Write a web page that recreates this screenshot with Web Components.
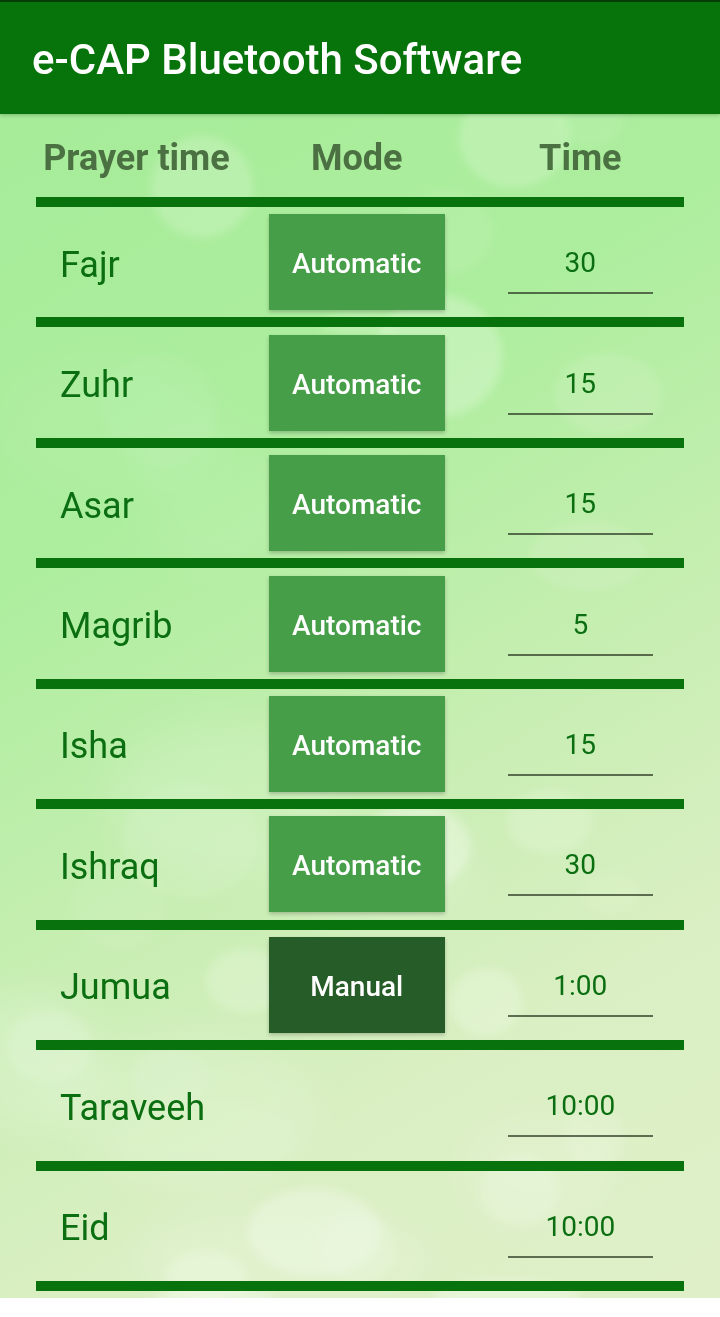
<!DOCTYPE html>
<html lang="en">
<head>
<meta charset="UTF-8">
<meta name="viewport" content="width=device-width, initial-scale=1">
<title>e-CAP Bluetooth Software</title>
<style>
  body {
    margin: 0;
    background: #fff;
    font-family: Roboto, "Liberation Sans", sans-serif;
  }
</style>
</head>
<body>

<ecap-app>
  <app-bar slot="bar">e-CAP Bluetooth Software</app-bar>
  <prayer-table></prayer-table>
</ecap-app>

<script>
class AppBar extends HTMLElement {
  constructor() {
    super();
    this.attachShadow({ mode: "open" });

    this.shadowRoot.innerHTML = `
      <style>
        :host {
          display: block;
          position: relative;
          border-top: 2px solid #043c08;
          background: #07730b;
          box-shadow: 0 1px 4px rgba(0, 60, 0, 0.3);
          color: #fff;
        }

        h1 {
          margin: 0;
          padding: 34px 32px 30px;
          font-size: 42px;
          line-height: 48px;
          font-weight: 500;
        }
      </style>

      <header><h1><slot></slot></h1></header>
    `;
  }
}

/* Soft light spots over the green gradient */
class BokehBackdrop extends HTMLElement {
  constructor() {
    super();
    this.attachShadow({ mode: "open" });

    this.shadowRoot.innerHTML = `
      <style>
        :host {
          display: block;
          background: linear-gradient(150deg, #a6ec99 0%, #adee9e 30%, #c7eeb2 55%, #daefc3 76%, #dff0c8 100%);
        }

        svg {
          display: block;
          width: 100%;
          height: 100%;
        }
      </style>

      <svg viewBox="0 114 720 1184" preserveAspectRatio="none" aria-hidden="true">
        <defs>
          <filter id="soft" x="-20%" y="-20%" width="140%" height="140%"><feGaussianBlur stdDeviation="4"/></filter>
          <filter id="wide" x="-30%" y="-30%" width="160%" height="160%"><feGaussianBlur stdDeviation="18"/></filter>
        </defs>
        <g fill="#fff" filter="url(#wide)">
          <ellipse cx="110" cy="425" rx="110" ry="70" opacity=".06"/>
          <ellipse cx="220" cy="500" rx="80" ry="75" opacity=".06"/>
          <ellipse cx="225" cy="800" rx="120" ry="80" opacity=".12"/>
          <ellipse cx="30" cy="1060" rx="70" ry="70" opacity=".18"/>
          <ellipse cx="380" cy="870" rx="100" ry="60" opacity=".1"/>
          <ellipse cx="190" cy="1110" rx="130" ry="80" opacity=".12"/>
          <ellipse cx="540" cy="1170" rx="80" ry="60" opacity=".12"/>
          <ellipse cx="280" cy="1260" rx="150" ry="50" opacity=".14"/>
        </g>
        <g fill="#f1fbe9" filter="url(#soft)">
          <ellipse cx="202" cy="187" rx="51" ry="51" opacity=".24"/>
          <ellipse cx="514" cy="138" rx="55" ry="50" opacity=".26"/>
          <ellipse cx="592" cy="118" rx="32" ry="30" opacity=".1"/>
          <ellipse cx="446" cy="232" rx="48" ry="42" opacity=".1"/>
          <ellipse cx="438" cy="356" rx="64" ry="61" opacity=".32"/>
          <ellipse cx="360" cy="324" rx="40" ry="11" opacity=".25"/>
          <ellipse cx="608" cy="394" rx="53" ry="40" opacity=".16"/>
          <ellipse cx="588" cy="556" rx="58" ry="34" opacity=".14"/>
          <ellipse cx="160" cy="410" rx="58" ry="56" opacity=".06"/>
          <ellipse cx="190" cy="840" rx="68" ry="58" opacity=".1"/>
          <ellipse cx="118" cy="905" rx="46" ry="44" opacity=".08"/>
          <ellipse cx="416" cy="847" rx="55" ry="44" opacity=".42"/>
          <ellipse cx="550" cy="822" rx="43" ry="32" opacity=".24"/>
          <ellipse cx="610" cy="893" rx="30" ry="20" opacity=".12"/>
          <ellipse cx="246" cy="981" rx="40" ry="32" opacity=".28"/>
          <ellipse cx="486" cy="1002" rx="36" ry="34" opacity=".34"/>
          <ellipse cx="50" cy="1046" rx="42" ry="36" opacity=".2"/>
          <ellipse cx="170" cy="1078" rx="38" ry="32" opacity=".14"/>
          <ellipse cx="206" cy="1138" rx="92" ry="40" opacity=".08"/>
          <ellipse cx="594" cy="1138" rx="30" ry="32" opacity=".22"/>
          <ellipse cx="520" cy="1190" rx="40" ry="36" opacity=".28"/>
          <ellipse cx="314" cy="1232" rx="67" ry="44" opacity=".42"/>
          <ellipse cx="358" cy="1248" rx="38" ry="36" opacity=".25"/>
          <ellipse cx="206" cy="1278" rx="42" ry="28" opacity=".34"/>
          <ellipse cx="215" cy="1302" rx="62" ry="14" opacity=".55"/>
          <ellipse cx="506" cy="1298" rx="74" ry="18" opacity=".5"/>
        </g>
      </svg>
    `;
  }
}

class ModeButton extends HTMLElement {
  constructor() {
    super();
    this.attachShadow({ mode: "open" });

    this.shadowRoot.innerHTML = `
      <style>
        :host {
          display: block;
        }

        button {
          display: block;
          box-sizing: border-box;
          width: 176px;
          height: 96px;
          margin: 0 auto;
          padding: 4px 0 0;
          border: none;
          background: #469e48;
          box-shadow: 0 2px 4px rgba(0, 0, 0, 0.22);
          color: #fff;
          font: 500 28px/32px Roboto, "Liberation Sans", sans-serif;
          cursor: pointer;
        }

        :host([mode="Manual"]) button {
          background: #265c28;
        }
      </style>

      <button type="button"></button>
    `;

    this.button = this.shadowRoot.querySelector("button");
    this.toggleMode = this.toggleMode.bind(this);
  }

  connectedCallback() {
    this.button.textContent = this.getAttribute("mode");
    this.button.addEventListener("click", this.toggleMode);
  }

  toggleMode() {
    const mode = this.getAttribute("mode") === "Manual" ? "Automatic" : "Manual";
    this.setAttribute("mode", mode);
    this.button.textContent = mode;
  }
}

class TimeField extends HTMLElement {
  constructor() {
    super();
    this.attachShadow({ mode: "open" });

    this.shadowRoot.innerHTML = `
      <style>
        :host {
          display: block;
        }

        input {
          display: block;
          box-sizing: border-box;
          width: 70%;
          margin: 0 auto;
          padding: 17px 0 13px;
          border: none;
          border-bottom: 2px solid rgba(40, 52, 32, 0.7);
          border-radius: 0;
          outline: none;
          background: transparent;
          color: #0b6f12;
          font: 400 28px/32px Roboto, "Liberation Sans", sans-serif;
          text-align: center;
        }
      </style>

      <input type="text">
    `;
  }

  connectedCallback() {
    const input = this.shadowRoot.querySelector("input");
    input.value = this.getAttribute("value");
    input.setAttribute("aria-label", this.getAttribute("label"));
  }
}

class PrayerTable extends HTMLElement {
  constructor() {
    super();
    this.attachShadow({ mode: "open" });

    const prayers = [
      { name: "Fajr", mode: "Automatic", time: "30" },
      { name: "Zuhr", mode: "Automatic", time: "15" },
      { name: "Asar", mode: "Automatic", time: "15" },
      { name: "Magrib", mode: "Automatic", time: "5" },
      { name: "Isha", mode: "Automatic", time: "15" },
      { name: "Ishraq", mode: "Automatic", time: "30" },
      { name: "Jumua", mode: "Manual", time: "1:00" },
      { name: "Taraveeh", time: "10:00" },
      { name: "Eid", time: "10:00" }
    ];

    const rows = prayers.map((p) => `
      <tr>
        <th scope="row">${p.name}</th>
        <td>${p.mode ? `<mode-button mode="${p.mode}"></mode-button>` : ""}</td>
        <td><time-field label="${p.name} time" value="${p.time}"></time-field></td>
      </tr>
    `).join("");

    this.shadowRoot.innerHTML = `
      <style>
        :host {
          display: flex;
          flex-direction: column;
        }

        table {
          flex: 1;
          width: 100%;
          table-layout: fixed;
          border-collapse: separate;
          border-spacing: 0;
        }

        th, td {
          box-sizing: border-box;
          padding: 0;
          border-bottom: 10px solid #08730d;
          vertical-align: middle;
        }

        thead th {
          height: 93px;
          padding-top: 4px;
          color: #4b7142;
          font-size: 36px;
          line-height: 48px;
          font-weight: 700;
          white-space: nowrap;
        }

        tbody th, tbody td {
          height: 120px;
        }

        tbody th {
          padding: 5px 0 0 24px;
          color: #0b6f12;
          font-size: 36px;
          line-height: 48px;
          font-weight: 400;
          text-align: left;
        }

        .name { width: 31%; }
        .mode { width: 37%; }
        .time { width: 32%; }
      </style>

      <table>
        <thead>
          <tr>
            <th class="name" scope="col">Prayer time</th>
            <th class="mode" scope="col">Mode</th>
            <th class="time" scope="col">Time</th>
          </tr>
        </thead>
        <tbody>${rows}</tbody>
      </table>
    `;
  }
}

class EcapApp extends HTMLElement {
  constructor() {
    super();
    this.attachShadow({ mode: "open" });

    this.shadowRoot.innerHTML = `
      <style>
        :host {
          display: flex;
          flex-direction: column;
          box-sizing: border-box;
          min-height: 100vh;
          padding-bottom: 19px;
        }

        slot[name="bar"] {
          display: block;
          position: relative;
          z-index: 1;
        }

        main {
          position: relative;
          flex: 1;
          display: flex;
          flex-direction: column;
          padding: 0 5% 7px;
        }

        bokeh-backdrop {
          position: absolute;
          inset: 0;
        }

        ::slotted(prayer-table) {
          position: relative;
          flex: 1;
        }
      </style>

      <slot name="bar"></slot>
      <main>
        <bokeh-backdrop></bokeh-backdrop>
        <slot></slot>
      </main>
    `;
  }
}

customElements.define("app-bar", AppBar);
customElements.define("bokeh-backdrop", BokehBackdrop);
customElements.define("mode-button", ModeButton);
customElements.define("time-field", TimeField);
customElements.define("prayer-table", PrayerTable);
customElements.define("ecap-app", EcapApp);
</script>
</body>
</html>
